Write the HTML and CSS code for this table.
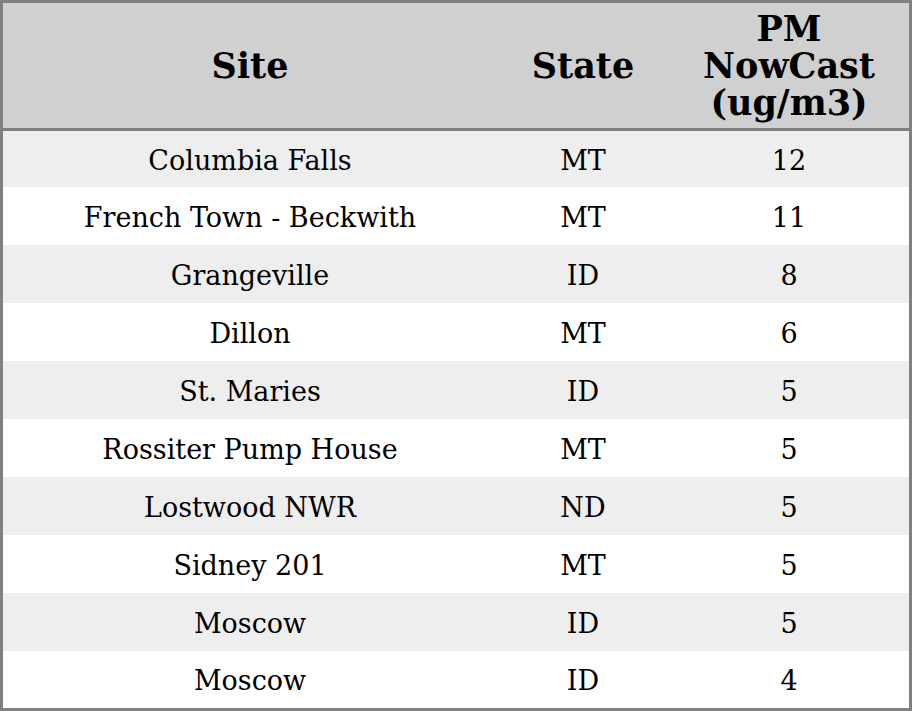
FILE: index.html
```html
<!DOCTYPE html>
<html>
<head>
<meta charset="utf-8">
<link rel="stylesheet" href="styles.css">
</head>
<body>
<table class="aq">
  <colgroup>
    <col class="c-site">
    <col class="c-state">
    <col class="c-pm">
  </colgroup>
  <thead>
    <tr><th>Site</th><th>State</th><th>PM<br>NowCast<br>(ug/m3)</th></tr>
  </thead>
  <tbody>
    <tr><td>Columbia Falls</td><td>MT</td><td>12</td></tr>
    <tr><td>French Town - Beckwith</td><td>MT</td><td>11</td></tr>
    <tr><td>Grangeville</td><td>ID</td><td>8</td></tr>
    <tr><td>Dillon</td><td>MT</td><td>6</td></tr>
    <tr><td>St. Maries</td><td>ID</td><td>5</td></tr>
    <tr><td>Rossiter Pump House</td><td>MT</td><td>5</td></tr>
    <tr><td>Lostwood NWR</td><td>ND</td><td>5</td></tr>
    <tr><td>Sidney 201</td><td>MT</td><td>5</td></tr>
    <tr><td>Moscow</td><td>ID</td><td>5</td></tr>
    <tr><td>Moscow</td><td>ID</td><td>4</td></tr>
  </tbody>
</table>
</body>
</html>
```
FILE: styles.css
```css
html, body {
  margin: 0;
  padding: 0;
  background: #ffffff;
}
.aq {
  width: 912px;
  table-layout: fixed;
  border-collapse: separate;
  border-spacing: 0;
  border: 3px solid #808080;
  font-family: "DejaVu Serif", serif;
  color: #000;
}
.c-site { width: 494px; }
.c-state { width: 172px; }
.c-pm { width: 240px; }
.aq th,
.aq td {
  box-sizing: border-box;
}
.aq th {
  background: #d0d0d0;
  font-size: 35px;
  font-weight: bold;
  line-height: 37px;
  height: 128px;
  padding: 0;
  text-align: center;
  vertical-align: middle;
  border-bottom: 3px solid #808080;
}
.aq td {
  font-size: 27px;
  height: 58px;
  padding: 2px 0 0 0;
  text-align: center;
  vertical-align: middle;
}
.aq tbody tr:nth-child(odd) td { background: #eeeeee; }
.aq tbody tr:first-child td { height: 56px; }
.aq tbody tr:last-child td { height: 57px; }
```
